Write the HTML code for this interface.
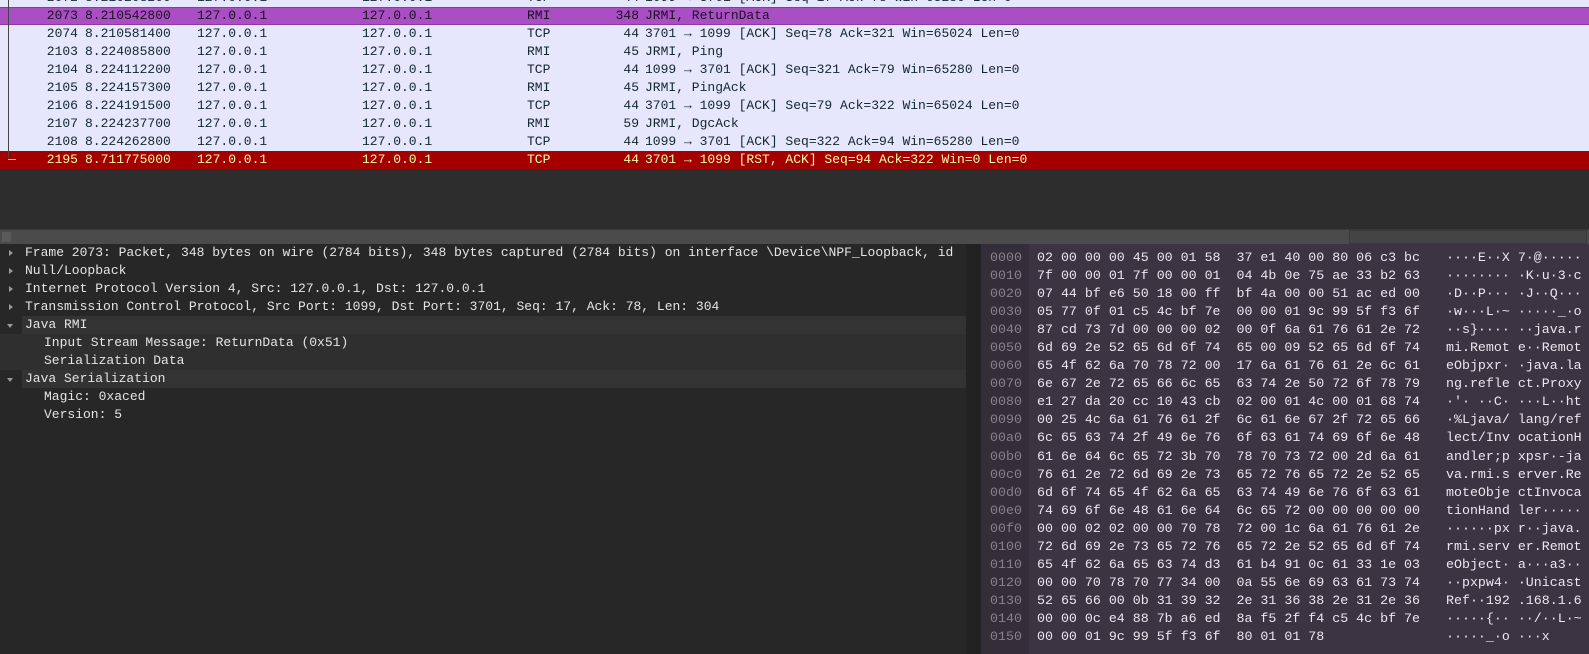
<!DOCTYPE html>
<html><head><meta charset="utf-8"><style>
body{margin:0;width:1589px;height:654px;overflow:hidden;background:#2d2d2d;font-family:"Liberation Mono","DejaVu Sans Mono",monospace;position:relative}
.r{position:absolute;left:0;width:1589px;height:18px;font-size:13px;line-height:18px;color:#12272e;background:#e6e6fc;white-space:pre}
.r span{position:absolute;top:0}
.sel{background:#a94fc3;color:#1a1020;border-top:1px solid #8a3aa8;border-bottom:1px solid #8a3aa8;box-sizing:border-box;line-height:16px}
.red{background:#a40000;color:#fffc9c}
.no{left:0;width:78px;text-align:right}
.t{left:85px}.s{left:197px}.d{left:362px}.p{left:527px}.l{left:560px;width:79px;text-align:right}.i{left:645px}
#vl{position:absolute;left:8px;top:0;width:1px;height:158px;background:#444}
#sb{position:absolute;left:0;top:229px;width:1589px;height:14px;background:#4b4b4b;border-top:1px solid #3a3a3a}
#th{position:absolute;left:1349px;top:0;width:236px;height:12px;background:#444;border:1px solid #3a3a3a}
#det{position:absolute;left:0;top:244px;width:966px;height:410px;background:#272727}
.dr{position:absolute;left:0;width:966px;height:18px;font-size:13px;line-height:18px;color:#e4e4e4;white-space:pre}
.hl{background:#333}
.tri{position:absolute;left:9px;top:6px;width:0;height:0;border-top:3px solid transparent;border-bottom:3px solid transparent;border-left:4px solid #9a9a9a}
.trd{position:absolute;left:7px;top:8px;width:0;height:0;border-left:3px solid transparent;border-right:3px solid transparent;border-top:4px solid #9a9a9a}
#hex{position:absolute;left:981px;top:244px;width:608px;height:410px;background:#3c3443}
#hoff{position:absolute;left:981px;top:244px;width:48px;height:410px;background:#342d3a}
pre{margin:0;position:absolute;top:249px;font-family:inherit;font-size:13.3px;line-height:18.05px;color:#ebe6ee}
#split{position:absolute;left:966px;top:244px;width:15px;height:410px;background:#222}
</style></head><body>
<div class="r" style="top:-11px"><span class="no">2072</span><span class="t">8.210208200</span><span class="s">127.0.0.1</span><span class="d">127.0.0.1</span><span class="p">TCP</span><span class="l">44</span><span class="i">1099 → 3701 [ACK] Seq=17 Ack=78 Win=65280 Len=0</span></div>
<div class="r sel" style="top:7px"><span class="no">2073</span><span class="t">8.210542800</span><span class="s">127.0.0.1</span><span class="d">127.0.0.1</span><span class="p">RMI</span><span class="l">348</span><span class="i">JRMI, ReturnData</span></div>
<div class="r" style="top:25px"><span class="no">2074</span><span class="t">8.210581400</span><span class="s">127.0.0.1</span><span class="d">127.0.0.1</span><span class="p">TCP</span><span class="l">44</span><span class="i">3701 → 1099 [ACK] Seq=78 Ack=321 Win=65024 Len=0</span></div>
<div class="r" style="top:43px"><span class="no">2103</span><span class="t">8.224085800</span><span class="s">127.0.0.1</span><span class="d">127.0.0.1</span><span class="p">RMI</span><span class="l">45</span><span class="i">JRMI, Ping</span></div>
<div class="r" style="top:61px"><span class="no">2104</span><span class="t">8.224112200</span><span class="s">127.0.0.1</span><span class="d">127.0.0.1</span><span class="p">TCP</span><span class="l">44</span><span class="i">1099 → 3701 [ACK] Seq=321 Ack=79 Win=65280 Len=0</span></div>
<div class="r" style="top:79px"><span class="no">2105</span><span class="t">8.224157300</span><span class="s">127.0.0.1</span><span class="d">127.0.0.1</span><span class="p">RMI</span><span class="l">45</span><span class="i">JRMI, PingAck</span></div>
<div class="r" style="top:97px"><span class="no">2106</span><span class="t">8.224191500</span><span class="s">127.0.0.1</span><span class="d">127.0.0.1</span><span class="p">TCP</span><span class="l">44</span><span class="i">3701 → 1099 [ACK] Seq=79 Ack=322 Win=65024 Len=0</span></div>
<div class="r" style="top:115px"><span class="no">2107</span><span class="t">8.224237700</span><span class="s">127.0.0.1</span><span class="d">127.0.0.1</span><span class="p">RMI</span><span class="l">59</span><span class="i">JRMI, DgcAck</span></div>
<div class="r" style="top:133px"><span class="no">2108</span><span class="t">8.224262800</span><span class="s">127.0.0.1</span><span class="d">127.0.0.1</span><span class="p">TCP</span><span class="l">44</span><span class="i">1099 → 3701 [ACK] Seq=322 Ack=94 Win=65280 Len=0</span></div>
<div class="r red" style="top:151px"><span class="no">2195</span><span class="t">8.711775000</span><span class="s">127.0.0.1</span><span class="d">127.0.0.1</span><span class="p">TCP</span><span class="l">44</span><span class="i">3701 → 1099 [RST, ACK] Seq=94 Ack=322 Win=0 Len=0</span></div>
<div id="vl"></div>
<div style="position:absolute;left:8px;top:159px;width:8px;height:1px;background:#e0c0a0"></div>
<div id="sb"><div style="position:absolute;left:2px;top:2px;width:9px;height:10px;background:#5a5a5a"></div><div id="th"></div></div>
<div id="det">
<div class="dr" style="top:0"><i class="tri"></i><span style="position:absolute;left:25px">Frame 2073: Packet, 348 bytes on wire (2784 bits), 348 bytes captured (2784 bits) on interface \Device\NPF_Loopback, id</span></div>
<div class="dr" style="top:18px"><i class="tri"></i><span style="position:absolute;left:25px">Null/Loopback</span></div>
<div class="dr" style="top:36px"><i class="tri"></i><span style="position:absolute;left:25px">Internet Protocol Version 4, Src: 127.0.0.1, Dst: 127.0.0.1</span></div>
<div class="dr" style="top:54px"><i class="tri"></i><span style="position:absolute;left:25px">Transmission Control Protocol, Src Port: 1099, Dst Port: 3701, Seq: 17, Ack: 78, Len: 304</span></div>
<div class="dr" style="top:72px"><i class="trd"></i><span class="hl" style="position:absolute;left:22px;width:944px;padding-left:3px;box-sizing:border-box">Java RMI</span></div>
<div class="dr hl" style="top:90px;background:#2f2f2f"><span style="position:absolute;left:44px">Input Stream Message: ReturnData (0x51)</span></div>
<div class="dr hl" style="top:108px;background:#2f2f2f"><span style="position:absolute;left:44px">Serialization Data</span></div>
<div class="dr" style="top:126px"><i class="trd"></i><span class="hl" style="position:absolute;left:22px;width:944px;padding-left:3px;box-sizing:border-box">Java Serialization</span></div>
<div class="dr" style="top:144px"><span style="position:absolute;left:44px">Magic: 0xaced</span></div>
<div class="dr" style="top:162px"><span style="position:absolute;left:44px">Version: 5</span></div>
</div>
<div id="split"></div>
<div id="hex"></div><div id="hoff"></div>
<pre style="left:990px;color:#8a8090">0000
0010
0020
0030
0040
0050
0060
0070
0080
0090
00a0
00b0
00c0
00d0
00e0
00f0
0100
0110
0120
0130
0140
0150</pre>
<pre style="left:1037px">02 00 00 00 45 00 01 58  37 e1 40 00 80 06 c3 bc
7f 00 00 01 7f 00 00 01  04 4b 0e 75 ae 33 b2 63
07 44 bf e6 50 18 00 ff  bf 4a 00 00 51 ac ed 00
05 77 0f 01 c5 4c bf 7e  00 00 01 9c 99 5f f3 6f
87 cd 73 7d 00 00 00 02  00 0f 6a 61 76 61 2e 72
6d 69 2e 52 65 6d 6f 74  65 00 09 52 65 6d 6f 74
65 4f 62 6a 70 78 72 00  17 6a 61 76 61 2e 6c 61
6e 67 2e 72 65 66 6c 65  63 74 2e 50 72 6f 78 79
e1 27 da 20 cc 10 43 cb  02 00 01 4c 00 01 68 74
00 25 4c 6a 61 76 61 2f  6c 61 6e 67 2f 72 65 66
6c 65 63 74 2f 49 6e 76  6f 63 61 74 69 6f 6e 48
61 6e 64 6c 65 72 3b 70  78 70 73 72 00 2d 6a 61
76 61 2e 72 6d 69 2e 73  65 72 76 65 72 2e 52 65
6d 6f 74 65 4f 62 6a 65  63 74 49 6e 76 6f 63 61
74 69 6f 6e 48 61 6e 64  6c 65 72 00 00 00 00 00
00 00 02 02 00 00 70 78  72 00 1c 6a 61 76 61 2e
72 6d 69 2e 73 65 72 76  65 72 2e 52 65 6d 6f 74
65 4f 62 6a 65 63 74 d3  61 b4 91 0c 61 33 1e 03
00 00 70 78 70 77 34 00  0a 55 6e 69 63 61 73 74
52 65 66 00 0b 31 39 32  2e 31 36 38 2e 31 2e 36
00 00 0c e4 88 7b a6 ed  8a f5 2f f4 c5 4c bf 7e
00 00 01 9c 99 5f f3 6f  80 01 01 78</pre>
<pre style="left:1446px">····E··X 7·@·····
········ ·K·u·3·c
·D··P··· ·J··Q···
·w···L·~ ·····_·o
··s}···· ··java.r
mi.Remot e··Remot
eObjpxr· ·java.la
ng.refle ct.Proxy
·'· ··C· ···L··ht
·%Ljava/ lang/ref
lect/Inv ocationH
andler;p xpsr·-ja
va.rmi.s erver.Re
moteObje ctInvoca
tionHand ler·····
······px r··java.
rmi.serv er.Remot
eObject· a···a3··
··pxpw4· ·Unicast
Ref··192 .168.1.6
·····{·· ··/··L·~
·····_·o ···x</pre>
</body></html>
